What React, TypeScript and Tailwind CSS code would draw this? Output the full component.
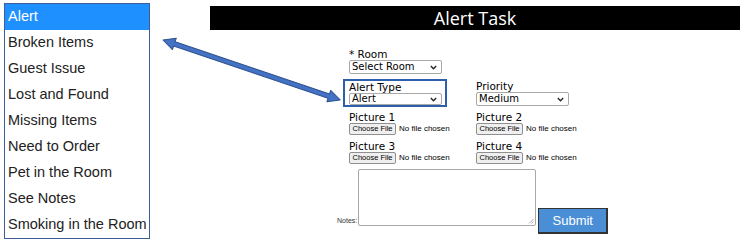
import React from 'react';

const ALERT_TYPES = [
  'Alert',
  'Broken Items',
  'Guest Issue',
  'Lost and Found',
  'Missing Items',
  'Need to Order',
  'Pet in the Room',
  'See Notes',
  'Smoking in the Room',
];

const FakeSelect: React.FC<{ value: string }> = ({ value }) => (
  <div className="flex items-center justify-between w-[93px] h-[14px] border border-[#a9a9a9] rounded-[2px] bg-white pl-[2px] pr-[4px] text-[10px] leading-none text-black">
    <span>{value}</span>
    <svg width="7" height="5" viewBox="0 0 7 5">
      <path d="M0.8 1 L3.5 3.8 L6.2 1" fill="none" stroke="#222" strokeWidth="1.3" />
    </svg>
  </div>
);

const FileInput: React.FC<{ label: string }> = ({ label }) => (
  <div className="flex flex-col">
    <span className="text-[10.5px] leading-[12px] text-black">{label}</span>
    <div className="flex items-center" style={{ fontFamily: '"Liberation Sans", Arial, sans-serif' }}>
      <div className="w-[47px] h-[12px] flex items-center justify-center whitespace-nowrap bg-[#efefef] border border-[#8f8f8f] rounded-[2px] text-[7.5px] leading-none text-black">
        Choose File
      </div>
      <span className="ml-[3px] whitespace-nowrap text-[8px] leading-none text-black">No file chosen</span>
    </div>
  </div>
);

const App: React.FC = () => {
  return (
    <div className="relative w-[748px] h-[242px] bg-white overflow-hidden" style={{ fontFamily: '"DejaVu Sans", Verdana, sans-serif' }}>
      <div className="flex">
        {/* Dropdown list */}
        <div className="ml-[4px] mt-[3px] w-[146px] h-[236px] border border-[#3d5c99] bg-white" style={{ fontFamily: '"Liberation Sans", Arial, sans-serif' }}>
          {ALERT_TYPES.map((item, i) => (
            <div
              key={item}
              className={`h-[26px] flex items-center pl-[3px] text-[14.5px] whitespace-nowrap ${i === 0 ? 'bg-[#1e90ff] text-white' : 'text-[#222]'}`}
            >
              {item}
            </div>
          ))}
        </div>

        {/* Task form */}
        <div className="ml-[60px] mt-[6px] flex flex-col">
          <div className="w-[530px] h-[24px] bg-black flex items-center justify-center text-white text-[18px]" style={{ fontFamily: '"Open Sans", sans-serif' }}>
            Alert Task
          </div>

          <div className="ml-[139px] mt-[18px] flex flex-col">
            <div className="flex flex-col">
              <span className="text-[10.5px] leading-[12px] text-black">* Room</span>
              <FakeSelect value="Select Room" />
            </div>

            <div className="flex mt-[5px]">
              <div className="w-[127px]">
                <div className="ml-[-6px] w-[104px] h-[28px] border-2 border-[#2e5fad] pl-[4px] flex flex-col">
                  <span className="text-[10.5px] leading-[12px] text-black">Alert Type</span>
                  <FakeSelect value="Alert" />
                </div>
              </div>
              <div className="flex flex-col pt-[1px]">
                <span className="text-[10.5px] leading-[12px] text-black">Priority</span>
                <FakeSelect value="Medium" />
              </div>
            </div>

            <div className="grid grid-cols-[127px_127px] gap-y-[5px] mt-[4px]">
              <FileInput label="Picture 1" />
              <FileInput label="Picture 2" />
              <FileInput label="Picture 3" />
              <FileInput label="Picture 4" />
            </div>

            <div className="flex items-end mt-[5px] ml-[-12px]" style={{ fontFamily: '"Liberation Sans", Arial, sans-serif' }}>
              <span className="text-[7px] leading-none text-[#333] mb-[2px]">Notes:</span>
              <div className="relative ml-[1px] w-[178px] h-[57px] border border-[#a9a9a9] rounded-[2px] bg-white">
                <svg className="absolute right-[1px] bottom-[1px]" width="6" height="6" viewBox="0 0 6 6">
                  <path d="M5.5 1 L1 5.5 M5.5 3.5 L3.5 5.5" stroke="#999" strokeWidth="0.8" />
                </svg>
              </div>
              <div className="ml-[2px] mb-[-8px] w-[70px] h-[26px] bg-[#4a8fd6] border border-[#333] border-b-2 border-r-2 flex items-center justify-center text-white text-[13px]">
                Submit
              </div>
            </div>
          </div>
        </div>
      </div>

      {/* Annotation arrow */}
      <svg className="absolute left-0 top-0 pointer-events-none" width="748" height="242">
        <g transform="translate(163,40) rotate(18.7)">
          <polygon
            points="0,0 12,-6 12,-2.3 175,-2.3 175,-6 187,0 175,6 175,2.3 12,2.3 12,6"
            fill="#4472c4"
            stroke="#2f528f"
            strokeWidth="1"
            strokeLinejoin="round"
          />
        </g>
      </svg>
    </div>
  );
};

export default App;
